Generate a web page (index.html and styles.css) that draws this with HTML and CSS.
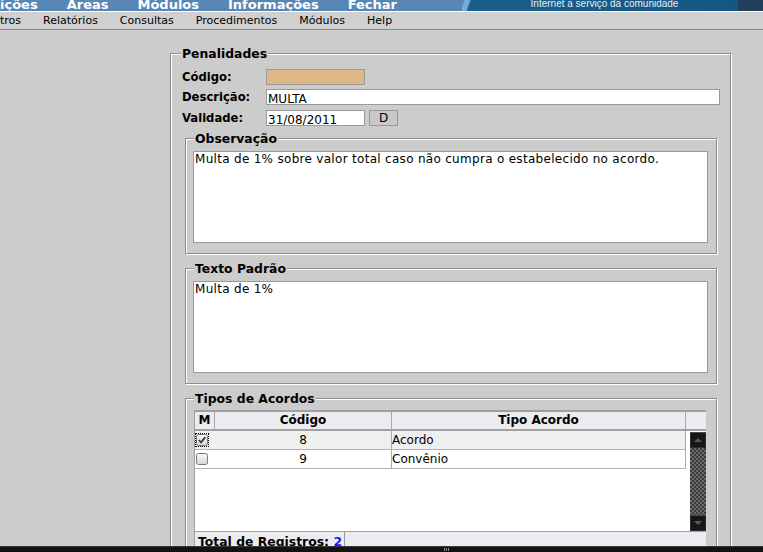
FILE: index.html
```html
<!DOCTYPE html>
<html lang="pt-BR">
<head>
<meta charset="utf-8">
<title>Penalidades</title>
<link rel="stylesheet" href="styles.css">
</head>
<body>
<header class="topbar">
  <nav class="topnav">
    <span>ições</span><span>Áreas</span><span>Módulos</span><span>Informações</span><span>Fechar</span>
  </nav>
  <div class="tagline">Internet a serviço da comunidade</div>
  <div class="topend"></div>
</header>
<nav class="menubar">
  <span>tros</span><span>Relatórios</span><span>Consultas</span><span>Procedimentos</span><span>Módulos</span><span>Help</span>
</nav>
<main class="page">
  <fieldset class="box outer">
    <legend>Penalidades</legend>
    <div class="form">
      <label class="lbl">Código:</label>
      <div class="field"><input class="inp code" type="text" value="" readonly></div>
      <label class="lbl">Descrição:</label>
      <div class="field"><input class="inp wide" type="text" value="MULTA"></div>
      <label class="lbl r3">Validade:</label>
      <div class="field r3"><input class="inp date" type="text" value="31/08/2011"><button class="btn" type="button">D</button></div>
    </div>
    <fieldset class="box inner first">
      <legend>Observação</legend>
      <textarea class="area">Multa de 1% sobre valor total caso não cumpra o estabelecido no acordo.</textarea>
    </fieldset>
    <fieldset class="box inner">
      <legend>Texto Padrão</legend>
      <textarea class="area">Multa de 1%</textarea>
    </fieldset>
    <fieldset class="box inner tipos">
      <legend>Tipos de Acordos</legend>
      <div class="grid">
        <div class="ghead">
          <div class="c cm">M</div><div class="c cc">Código</div><div class="c ct">Tipo Acordo</div><div class="c cs"></div>
        </div>
        <div class="gbody">
          <div class="rows">
            <div class="row odd">
              <div class="c cm"><span class="chk focus"><svg width="12" height="12" viewBox="0 0 12 12"><defs><linearGradient id="cg1" x1="0" y1="0" x2="0" y2="1"><stop offset="0" stop-color="#fafafa"/><stop offset="1" stop-color="#d6d6d6"/></linearGradient></defs><rect x="0.5" y="0.5" width="11" height="11" rx="2" fill="url(#cg1)" stroke="#777"/><path d="M2.8 6 L5 8.3 L9.3 3.2" fill="none" stroke="#4e2e5a" stroke-width="1.8"/></svg></span></div>
              <div class="c cc">8</div>
              <div class="c ct">Acordo</div>
            </div>
            <div class="row">
              <div class="c cm"><span class="chk"><svg width="12" height="12" viewBox="0 0 12 12"><defs><linearGradient id="cg2" x1="0" y1="0" x2="0" y2="1"><stop offset="0" stop-color="#fafafa"/><stop offset="1" stop-color="#d6d6d6"/></linearGradient></defs><rect x="0.5" y="0.5" width="11" height="11" rx="2" fill="url(#cg2)" stroke="#777"/></svg></span></div>
              <div class="c cc">9</div>
              <div class="c ct">Convênio</div>
            </div>
          </div>
          <div class="vscroll">
            <span class="sbtn up"><svg width="14" height="14" viewBox="0 0 14 14"><path d="M3 9 L7 5 L11 9 Z" fill="#5a5a5a"/></svg></span>
            <span class="track"></span>
            <span class="sbtn down"><svg width="14" height="14" viewBox="0 0 14 14"><path d="M3 5 L7 9 L11 5 Z" fill="#5a5a5a"/></svg></span>
          </div>
        </div>
        <div class="gfoot"><span class="total">Total de Registros: <a class="count">2</a></span></div>
      </div>
    </fieldset>
  </fieldset>
</main>
<div class="statusbar"><span class="grip"></span></div>
</body>
</html>
```
FILE: styles.css
```css
* { box-sizing: border-box; }
html { overflow: hidden; }
body {
  margin: 0;
  height: 552px;
  overflow: hidden;
  background: #cccccc;
  color: #000;
  font-family: "DejaVu Sans", sans-serif;
}

/* top blue bar */
.topbar {
  display: flex;
  height: 12px;
  border-bottom: 1px solid #ffffff;
  overflow: hidden;
}
.topnav {
  flex: 1;
  display: flex;
  gap: 29px;
  background: #5886b5;
  color: #ffffff;
  font-weight: bold;
  font-size: 13px;
  line-height: 9px;
  white-space: nowrap;
  overflow: hidden;
}
.tagline {
  width: 276px;
  padding-left: 9px;
  background: linear-gradient(110deg, #5886b5 0 2px, #77abd3 3px 7px, #1a5f8a 9px, #145781 100%);
  color: #e6edf4;
  font-family: "Liberation Sans", Arial, sans-serif;
  font-size: 10px;
  line-height: 8px;
  text-align: center;
  white-space: nowrap;
}
.topend {
  width: 25px;
  background: #243f5d;
}

/* grey menu */
.menubar {
  display: flex;
  gap: 22px;
  height: 18px;
  background: #d0d0d0;
  border-bottom: 1px solid #8a8a8a;
  font-size: 11px;
  line-height: 17px;
  white-space: nowrap;
}

/* main form */
.page {
  padding: 17px 0 0 170px;
}
.box {
  margin: 0;
  min-width: 0;
  border: 1px solid #8c8c8c;
  box-shadow: inset 1px 1px 0 #ffffff, 1px 1px 0 #ffffff;
}
.box > legend {
  padding: 0 1px;
  background: #cccccc;
  font-weight: bold;
  font-size: 12.4px;
  line-height: 13px;
}
.outer {
  width: 561px;
  padding: 9px 10px 0 11px;
}
.outer > legend { margin-left: -1px; }

.form {
  display: grid;
  grid-template-columns: 84px 1fr;
  row-gap: 4px;
  align-items: center;
}
.form .r3 { margin-top: 1px; }
.lbl {
  font-weight: bold;
  font-size: 11.6px;
}
.field {
  display: flex;
  gap: 4px;
}
.inp {
  height: 16px;
  margin: 0;
  padding: 3px 1px 0;
  border: 1px solid #999999;
  border-radius: 0;
  background: #ffffff;
  color: #000;
  font: 12px "DejaVu Sans", sans-serif;
  outline: none;
}
.inp.code { width: 99px; background: #deb887; }
.inp.wide { width: 100%; }
.inp.date { width: 99px; }
.btn {
  width: 29px;
  height: 16px;
  margin: 0;
  padding: 0;
  border: 1px solid #9a9a9a;
  border-radius: 0;
  background: #c8c8c8;
  color: #000;
  font: 12px/14px "DejaVu Sans", sans-serif;
}

.inner {
  margin: 8px 3px 0;
  padding: 6px 8px 10px 7px;
}
.inner.first { margin-top: 6px; }
.inner > legend { margin-left: 1px; }
.inner.tipos { padding-top: 5px; }

.area {
  display: block;
  width: 100%;
  height: 92px;
  margin: 0;
  padding: 0 1px;
  border: 1px solid #999999;
  border-radius: 0;
  background: #ffffff;
  color: #000;
  font: 12px/14px "DejaVu Sans", sans-serif;
  letter-spacing: 0.3px;
  resize: none;
  overflow: hidden;
  outline: none;
}

/* grid */
.grid {
  width: 512px;
  margin-left: 1px;
  border-left: 1px solid #a0a0a0;
  font-size: 12px;
  background: #ffffff;
}
.ghead {
  display: flex;
  height: 21px;
  background: #ececf0;
  border-top: 2px solid #a0a0a0;
  border-bottom: 2px solid #a0a0a0;
  font-weight: bold;
  line-height: 17px;
}
.c {
  border-right: 1px solid #aaaaaa;
  white-space: nowrap;
  overflow: hidden;
}
.cm { width: 20px; text-align: center; }
.cc { width: 177px; text-align: center; }
.ct { width: 294px; text-align: center; }
.cs { width: 20px; border-right: 0; }

.gbody {
  display: flex;
  height: 101px;
  border-bottom: 1px solid #a0a0a0;
}
.rows { width: 491px; }
.row {
  display: flex;
  height: 19px;
  border-bottom: 1px solid #b4b4b4;
  line-height: 18px;
}
.row.odd { background: #efefef; }
.row .cm {
  border-right: 0;
  display: flex;
  align-items: center;
  padding-left: 1px;
}
.row .ct { text-align: left; }
.chk {
  display: block;
  width: 12px;
  height: 12px;
}
.chk svg { display: block; }
.chk.focus { outline: 1px dotted #000; outline-offset: 0; }

.vscroll {
  width: 16px;
  margin: 1px 0 0 4px;
  display: flex;
  flex-direction: column;
  height: 99px;
}
.sbtn {
  display: flex;
  align-items: center;
  justify-content: center;
  height: 16px;
  background: #161616;
  border: 1px solid #2e2e2e;
  border-top-color: #4a4a4a;
}
.track {
  flex: 1;
  background: conic-gradient(#3c3c3c 25%, #6c6c6c 0 50%, #3c3c3c 0 75%, #6c6c6c 0) 0 0 / 4px 4px;
}

.gfoot {
  display: flex;
  height: 20px;
  background: #ececf0;
}
.total {
  padding: 2px 2px 0 3px;
  border-right: 1px solid #999999;
  font-weight: bold;
  font-size: 12.4px;
  line-height: 16px;
  white-space: nowrap;
}
.count { color: #1515ff; }

/* bottom dark strip */
.statusbar {
  position: fixed;
  left: 0;
  right: 0;
  bottom: 0;
  height: 6px;
  padding-left: 444px;
  background: #121212;
  border-top: 1px solid #3a3a3a;
  display: flex;
  align-items: center;
}
.grip {
  width: 5px;
  height: 3px;
  background: repeating-linear-gradient(90deg, #8a8a8a 0 1px, transparent 1px 2px);
}
```
